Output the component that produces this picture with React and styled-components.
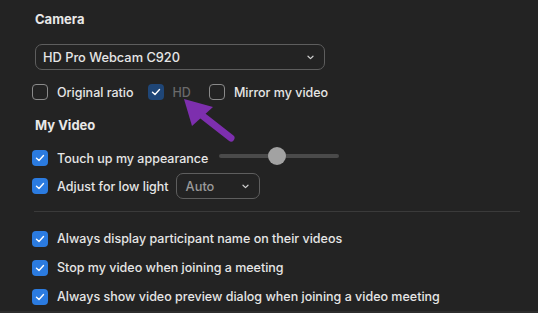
import React from 'react'
import styled, { createGlobalStyle } from 'styled-components'

const Global = createGlobalStyle`
    body {
        margin: 0;
        background: #232323;
        font-family: Inter, 'Noto Sans', sans-serif;
        color: #e4e4e4;
    }
`

const Page = styled.div`
    position: relative;
    width: 538px;
    height: 313px;
    overflow: hidden;
    padding: 0 18px 0 32px;
    box-sizing: border-box;
    border-bottom: 2px solid #2d2d2d;
`

const Title = styled.div`
    font-size: 13px;
    font-weight: 700;
    line-height: 20px;
    padding-left: 3px;
    margin-top: ${p => p.$top}px;
    color: #e8e8e8;
`

const Select = styled.div`
    display: flex;
    align-items: center;
    justify-content: space-between;
    box-sizing: border-box;
    width: ${p => p.$width}px;
    height: 26px;
    margin-top: ${p => p.$top || 0}px;
    margin-left: ${p => p.$left || 0}px;
    padding: 0 10px 0 ${p => p.$pad || 7}px;
    border: 1px solid #5e5e5e;
    border-radius: 7px;
    font-size: 12.8px;
    font-weight: 500;
    color: ${p => p.$muted ? '#9a9a9a' : '#e6e6e6'};
`

const Row = styled.div`
    display: flex;
    align-items: center;
    height: ${p => p.$h || 24}px;
    margin-top: ${p => p.$top || 0}px;
    font-size: 12.5px;
    font-weight: 500;
`

const Box = styled.span`
    flex: none;
    width: 16px;
    height: 16px;
    box-sizing: border-box;
    border-radius: 4px;
    display: flex;
    align-items: center;
    justify-content: center;
    background: ${p => p.$dim ? '#1f4677' : p.$on ? '#2b7be0' : 'transparent'};
    border: ${p => p.$on ? 'none' : '1px solid #8a8a8a'};
    margin-left: ${p => p.$left || 0}px;
`

const Label = styled.span`
    margin-left: 9px;
    color: ${p => p.$muted ? '#6a6a6a' : '#e6e6e6'};
    white-space: nowrap;
`

const Track = styled.div`
    position: relative;
    width: 120px;
    height: 4px;
    border-radius: 2px;
    background: #4a4a4a;
    margin-left: 11px;
    margin-top: -4px;
`

const Thumb = styled.div`
    position: absolute;
    left: 49px;
    top: -7px;
    width: 18px;
    height: 18px;
    border-radius: 50%;
    background: #a2a2a2;
`

const Divider = styled.div`
    height: 1px;
    background: #3a3a3a;
    margin: 12px 0 0 2px;
`

const Arrow = styled.svg`
    position: absolute;
    left: 0;
    top: 0;
    pointer-events: none;
`

const Check = () => (
    <svg width="10" height="8" viewBox="0 0 10 8">
        <path d="M1.5 4.2 L4 6.5 L8.5 1.5" fill="none" stroke="#fff" strokeWidth="1.4" strokeLinecap="round" strokeLinejoin="round" />
    </svg>
)

const Chevron = () => (
    <svg width="7" height="5" viewBox="0 0 7 5">
        <path d="M1 1.2 L3.5 3.6 L6 1.2" fill="none" stroke="#d0d0d0" strokeWidth="1.2" strokeLinecap="round" strokeLinejoin="round" />
    </svg>
)

const Option = ({ on, dim, left, muted, children }) => (
    <>
        <Box $on={on} $dim={dim} $left={left}>{on && <Check />}</Box>
        <Label $muted={muted}>{children}</Label>
    </>
)

const App = () => (
    <>
        <Global />
        <Page>
            <Title $top={9}>Camera</Title>
            <Select $width={290} $top={15} $left={3}>
                <span>HD Pro Webcam C920</span>
                <Chevron />
            </Select>
            <Row $top={10}>
                <Option>Original ratio</Option>
                <Option on dim left={14} muted>HD</Option>
                <Option left={18}>Mirror my video</Option>
            </Row>
            <Title $top={11}>My Video</Title>
            <Row $top={11}>
                <Option on>Touch up my appearance</Option>
                <Track><Thumb /></Track>
            </Row>
            <Row $top={3} $h={26}>
                <Option on>Adjust for low light</Option>
                <Select $width={84} $left={7} $pad={9} $muted>
                    <span>Auto</span>
                    <Chevron />
                </Select>
            </Row>
            <Divider />
            <Row $top={12} $h={29}>
                <Option on>Always display participant name on their videos</Option>
            </Row>
            <Row $h={29}>
                <Option on>Stop my video when joining a meeting</Option>
            </Row>
            <Row $h={29}>
                <Option on>Always show video preview dialog when joining a video meeting</Option>
            </Row>
            <Arrow width="538" height="313">
                <line x1="231" y1="138" x2="199" y2="113" stroke="#7d2fae" strokeWidth="7" strokeLinecap="round" />
                <polygon points="184,99 213,107 192,126" fill="#7d2fae" />
            </Arrow>
        </Page>
    </>
)

export default App
